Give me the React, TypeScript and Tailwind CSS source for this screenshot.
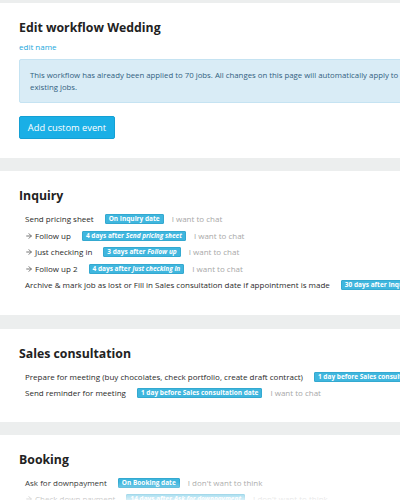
import { ArrowRight } from "lucide-react";
import type { ReactNode } from "react";

type Step = {
  label: string;
  arrow?: boolean;
  badge: ReactNode;
  note?: string;
};

const font = { fontFamily: '"Open Sans", "Liberation Sans", sans-serif' };

function Badge({ children }: { children: ReactNode }) {
  return (
    <span className="ml-[11px] inline-flex h-[10px] shrink-0 items-center rounded-[1px] border border-[#34a9d0] bg-[#3fb6de] px-[3px] text-[6.5px] font-bold leading-none text-white">
      <span className="whitespace-pre">{children}</span>
    </span>
  );
}

function StepRow({ step }: { step: Step }) {
  return (
    <li className="flex h-[16.5px] items-center whitespace-nowrap pl-[6px] text-[8px] text-[#2a2a2a]">
      {step.arrow && <ArrowRight className="mr-[2px] h-[8px] w-[8px] text-[#777]" strokeWidth={3} aria-hidden />}
      <span>{step.label}</span>
      <Badge>{step.badge}</Badge>
      {step.note && <span className="ml-[8px] text-[#a8a8a8]">{step.note}</span>}
    </li>
  );
}

function Section({ title, steps, pb }: { title: string; steps: Step[]; pb: string }) {
  return (
    <section className={`overflow-hidden bg-white px-[19px] pt-[17px] ${pb}`}>
      <h2 className="text-[12.3px] font-bold leading-[16px] text-[#222]">{title}</h2>
      <ul className="mt-[7px]">
        {steps.map((s) => (
          <StepRow step={s} key={s.label} />
        ))}
      </ul>
    </section>
  );
}

const inquiry: Step[] = [
  { label: "Send pricing sheet", badge: "On Inquiry date", note: "I want to chat" },
  { label: "Follow up", arrow: true, badge: <>4 days after <i>Send pricing sheet</i></>, note: "I want to chat" },
  { label: "Just checking in", arrow: true, badge: <>3 days after <i>Follow up</i></>, note: "I want to chat" },
  { label: "Follow up 2", arrow: true, badge: <>4 days after <i>Just checking in</i></>, note: "I want to chat" },
  { label: "Archive & mark job as lost or Fill in Sales consultation date if appointment is made", badge: "30 days after Inquiry date" },
];

const sales: Step[] = [
  { label: "Prepare for meeting (buy chocolates, check portfolio, create draft contract)", badge: "1 day before Sales consultation date" },
  { label: "Send reminder for meeting", badge: "1 day before Sales consultation date", note: "I want to chat" },
];

const booking: Step[] = [
  { label: "Ask for downpayment", badge: "On Booking date", note: "I don't want to think" },
  { label: "Check down payment", arrow: true, badge: <>14 days after <i>Ask for downpayment</i></>, note: "I don't want to think" },
];

export default function App() {
  return (
    <div className="relative h-[500px] w-[400px] overflow-hidden bg-[#eceeee] pt-[3px]" style={font}>
      <section className="overflow-hidden bg-white px-[19px] pb-[19px] pt-[17px]">
        <h1 className="text-[12.3px] font-bold leading-[16px] text-[#222]">Edit workflow Wedding</h1>
        <a className="mt-[5px] block text-[8px] leading-[12px] text-[#1ba8dc]" href="#">edit name</a>
        <div className="mt-[6px] mr-[-40px] rounded-[2px] border border-[#c5e3f2] bg-[#d9ecf6] py-[9px] pl-[10px] text-[7.8px] leading-[12px] text-[#31617f]">
          <p className="whitespace-nowrap">This workflow has already been applied to 70 jobs. All changes on this page will automatically apply to</p>
          <p>existing jobs.</p>
        </div>
        <button className="mt-[13px] h-[23px] w-[96px] rounded-[2px] border border-[#14a0d4] bg-[#1aafe6] text-[9.3px] text-white">
          Add custom event
        </button>
      </section>
      <div className="h-[13px]" />
      <Section title="Inquiry" steps={inquiry} pb="pb-[21px]" />
      <div className="h-[14px]" />
      <Section title="Sales consultation" steps={sales} pb="pb-[20px]" />
      <div className="h-[13px]" />
      <Section title="Booking" steps={booking} pb="pb-[20px]" />
      <div className="pointer-events-none absolute inset-x-0 bottom-0 h-[18px] bg-gradient-to-t from-white/80 to-white/0" />
    </div>
  );
}
